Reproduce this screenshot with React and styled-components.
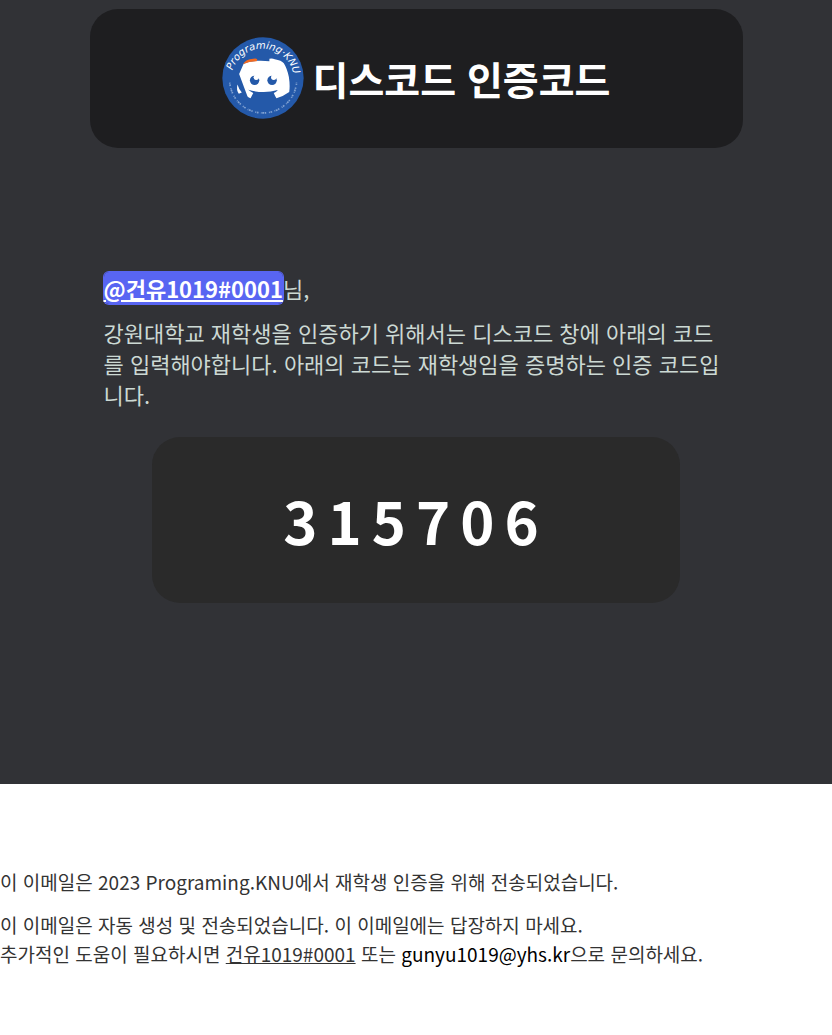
import React from "react";
import styled, { createGlobalStyle } from "styled-components";

const GlobalStyle = createGlobalStyle`
  body {
    margin: 0;
    background: #ffffff;
    font-family: "Noto Sans CJK KR", "Noto Sans", sans-serif;
  }
`;

const Message = styled.main`
  display: flex;
  flex-direction: column;
  align-items: center;
  padding: 9px 16px 181px;
  background: #313236;
`;

const Header = styled.header`
  box-sizing: border-box;
  width: 100%;
  max-width: 653px;
  display: flex;
  align-items: center;
  justify-content: center;
  gap: 9px;
  padding: 28px 16px 29px;
  border-radius: 28px;
  background: #1e1e20;
`;

const Logo = styled.svg`
  flex: none;
  width: 82px;
  height: 82px;
`;

const Title = styled.h1`
  margin: 0;
  color: #ffffff;
  font-size: 39px;
  line-height: 56px;
  font-weight: 700;
`;

const Content = styled.section`
  box-sizing: border-box;
  width: 100%;
  max-width: 653px;
  display: flex;
  flex-direction: column;
  gap: 13px;
  padding: 0 14px;
  margin: 125px 0 27px;
  color: #ccd9d4;
  font-size: 22px;
  line-height: 31px;
`;

const Paragraph = styled.p`
  margin: 0;
`;

const Mention = styled.a`
  border-radius: 5px;
  background: #5865f2;
  box-shadow: 0 0 0 1px #5865f2;
  color: #ffffff;
  font-weight: 700;
  text-decoration: underline;
`;

const CodeBox = styled.section`
  box-sizing: border-box;
  width: 100%;
  max-width: 528px;
  padding: 41px 16px;
  border-radius: 28px;
  background: #2a2a2a;
  color: #ffffff;
  font-size: 58px;
  line-height: 84px;
  font-weight: 700;
  letter-spacing: 10px;
  text-align: center;
`;

const Footer = styled.footer`
  display: flex;
  flex-direction: column;
  gap: 14px;
  padding: 83px 0 64px;
  color: #333333;
  font-size: 19px;
  line-height: 29px;
`;

const FooterLink = styled.a`
  color: ${({ $strong }) => ($strong ? "#000000" : "inherit")};
  text-decoration: ${({ $strong }) => ($strong ? "none" : "underline")};
`;

function ClubLogo() {
  return (
    <Logo viewBox="27 27 244 244" role="img" aria-label="Programing KNU">
      <defs>
        <path id="nameArc" d="M58 127 A94 94 0 0 1 241 165" />
      </defs>
      <circle cx="149" cy="149" r="121" fill="#2459a9" />
      <text
        fill="#ffffff"
        fontFamily="DejaVu Sans, sans-serif"
        fontSize="30"
        fontStyle="italic"
      >
        <textPath href="#nameArc">Programing·KNU</textPath>
      </text>
      <path
        d="M50 163 A100 100 0 0 0 249 163"
        fill="none"
        stroke="#a9c2e4"
        strokeWidth="5"
        strokeDasharray="3 2 5 7 2 2 6 2 4 8"
        opacity="0.7"
      />
      <path
        d="M78 137 L91 107 Q103 100 130 98 Q148 97 168 99 L168 92 Q176 90 184 93 Q204 96 211 105 Q221 121 226 146 Q230 171 227 191 Q210 204 189 209 Q184 202 181 194 Q189 191 193 185 Q150 197 105 184 Q112 190 120 194 L112 209 Q106 208 103 204 L94 180 Z"
        fill="#ffffff"
      />
      <path d="M89 109 Q98 93 120 92 Q127 89 132 93 L130 99 Q109 100 91 107 Z" fill="#f26a21" />
      <path d="M73 168 Q78 184 86 192 L77 196 Q69 184 73 168 Z" fill="#ffffff" />
      <circle cx="124" cy="156" r="14" fill="#2459a9" />
      <circle cx="176" cy="156" r="14" fill="#2459a9" />
      <circle cx="129" cy="147" r="8" fill="#ffffff" />
      <circle cx="181" cy="147" r="8" fill="#ffffff" />
    </Logo>
  );
}

export default function App() {
  return (
    <>
      <GlobalStyle />
      <Message lang="ko">
        <Header>
          <ClubLogo />
          <Title>디스코드 인증코드</Title>
        </Header>
        <Content>
          <Paragraph>
            <Mention href="#profile">@건유1019#0001</Mention>님,
          </Paragraph>
          <Paragraph>
            강원대학교 재학생을 인증하기 위해서는 디스코드 창에 아래의 코드를 입력해야합니다.
            아래의 코드는 재학생임을 증명하는 인증 코드입니다.
          </Paragraph>
        </Content>
        <CodeBox>315706</CodeBox>
      </Message>
      <Footer lang="ko">
        <Paragraph>이 이메일은 2023 Programing.KNU에서 재학생 인증을 위해 전송되었습니다.</Paragraph>
        <Paragraph>
          이 이메일은 자동 생성 및 전송되었습니다. 이 이메일에는 답장하지 마세요.
          <br />
          추가적인 도움이 필요하시면 <FooterLink href="#profile">건유1019#0001</FooterLink> 또는{" "}
          <FooterLink $strong href="mailto:gunyu1019@yhs.kr">gunyu1019@yhs.kr</FooterLink>으로
          문의하세요.
        </Paragraph>
      </Footer>
    </>
  );
}
